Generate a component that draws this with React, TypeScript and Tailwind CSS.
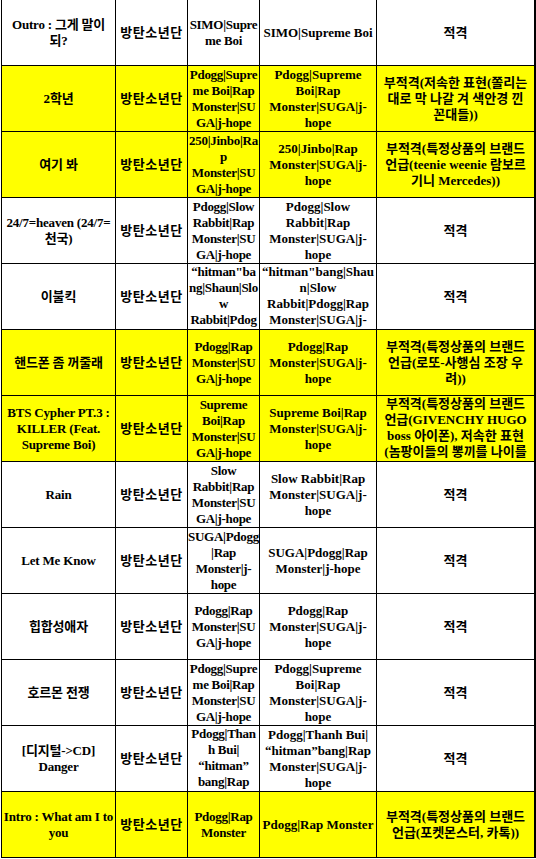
import React from 'react';

type Row = {
  title: string;
  artist: string;
  credits: string;
  rating: string;
  flagged?: boolean;
};

const rows: Row[] = [
  { title: 'Outro : 그게 말이 되?', artist: '방탄소년단', credits: 'SIMO|Supreme Boi', rating: '적격' },
  {
    title: '2학년',
    artist: '방탄소년단',
    credits: 'Pdogg|Supreme Boi|Rap Monster|SUGA|j-hope',
    rating: '부적격(저속한 표현(쫄리는 대로 막 나갈 겨 색안경 낀 꼰대들))',
    flagged: true,
  },
  {
    title: '여기 봐',
    artist: '방탄소년단',
    credits: '250|Jinbo|Rap Monster|SUGA|j-hope',
    rating: '부적격(특정상품의 브랜드 언급(teenie weenie 람보르기니 Mercedes))',
    flagged: true,
  },
  {
    title: '24/7=heaven (24/7=천국)',
    artist: '방탄소년단',
    credits: 'Pdogg|Slow Rabbit|Rap Monster|SUGA|j-hope',
    rating: '적격',
  },
  {
    title: '이불킥',
    artist: '방탄소년단',
    credits: '“hitman"bang|Shaun|Slow Rabbit|Pdogg|Rap Monster|SUGA|j-hope',
    rating: '적격',
  },
  {
    title: '핸드폰 좀 꺼줄래',
    artist: '방탄소년단',
    credits: 'Pdogg|Rap Monster|SUGA|j-hope',
    rating: '부적격(특정상품의 브랜드 언급(로또-사행심 조장 우려))',
    flagged: true,
  },
  {
    title: 'BTS Cypher PT.3 : KILLER (Feat. Supreme Boi)',
    artist: '방탄소년단',
    credits: 'Supreme Boi|Rap Monster|SUGA|j-hope',
    rating: '부적격(특정상품의 브랜드 언급(GIVENCHY HUGO boss 아이폰), 저속한 표현(놈팡이들의 뽕끼를 나이를 먹고))',
    flagged: true,
  },
  { title: 'Rain', artist: '방탄소년단', credits: 'Slow Rabbit|Rap Monster|SUGA|j-hope', rating: '적격' },
  { title: 'Let Me Know', artist: '방탄소년단', credits: 'SUGA|Pdogg|Rap Monster|j-hope', rating: '적격' },
  { title: '힙합성애자', artist: '방탄소년단', credits: 'Pdogg|Rap Monster|SUGA|j-hope', rating: '적격' },
  {
    title: '호르몬 전쟁',
    artist: '방탄소년단',
    credits: 'Pdogg|Supreme Boi|Rap Monster|SUGA|j-hope',
    rating: '적격',
  },
  {
    title: '[디지털->CD] Danger',
    artist: '방탄소년단',
    // zero-width spaces let the quoted name wrap on its own like the source sheet
    credits: 'Pdogg|Thanh Bui|\u200B“hitman”\u200Bbang|Rap Monster|SUGA|j-hope',
    rating: '적격',
  },
  {
    title: 'Intro : What am I to you',
    artist: '방탄소년단',
    credits: 'Pdogg|Rap Monster',
    rating: '부적격(특정상품의 브랜드 언급(포켓몬스터, 카톡))',
    flagged: true,
  },
];

function Cell({
  children,
  flagged,
  className = '',
}: {
  children: React.ReactNode;
  flagged?: boolean;
  className?: string;
}) {
  return (
    <div
      className={`flex flex-col overflow-hidden border-r border-b border-black ${
        flagged ? 'bg-[#ffff00]' : 'bg-white'
      }`}
    >
      <div className={`my-auto text-center break-words ${className}`}>{children}</div>
    </div>
  );
}

export default function App() {
  return (
    <div className="w-[536px] h-[859px] bg-white overflow-hidden">
      <div className="ml-px w-[535px] border-l border-r border-black">
        <div className="grid grid-cols-[114px_72px_72px_117px_158px] auto-rows-[66px] font-['Liberation_Serif','Noto_Sans_CJK_KR',serif] text-[13px] leading-4 font-bold text-black">
          {rows.map((row, i) => (
            <React.Fragment key={i}>
              <Cell flagged={row.flagged} className="tracking-[-0.2px]">
                {row.title}
              </Cell>
              <Cell flagged={row.flagged} className="tracking-[0.5px]">
                {row.artist}
              </Cell>
              <Cell flagged={row.flagged} className="tracking-[-0.28px]">
                {row.credits}
              </Cell>
              <Cell flagged={row.flagged}>{row.credits}</Cell>
              <Cell flagged={row.flagged} className="px-[4px]">
                {row.rating}
              </Cell>
            </React.Fragment>
          ))}
        </div>
      </div>
    </div>
  );
}
